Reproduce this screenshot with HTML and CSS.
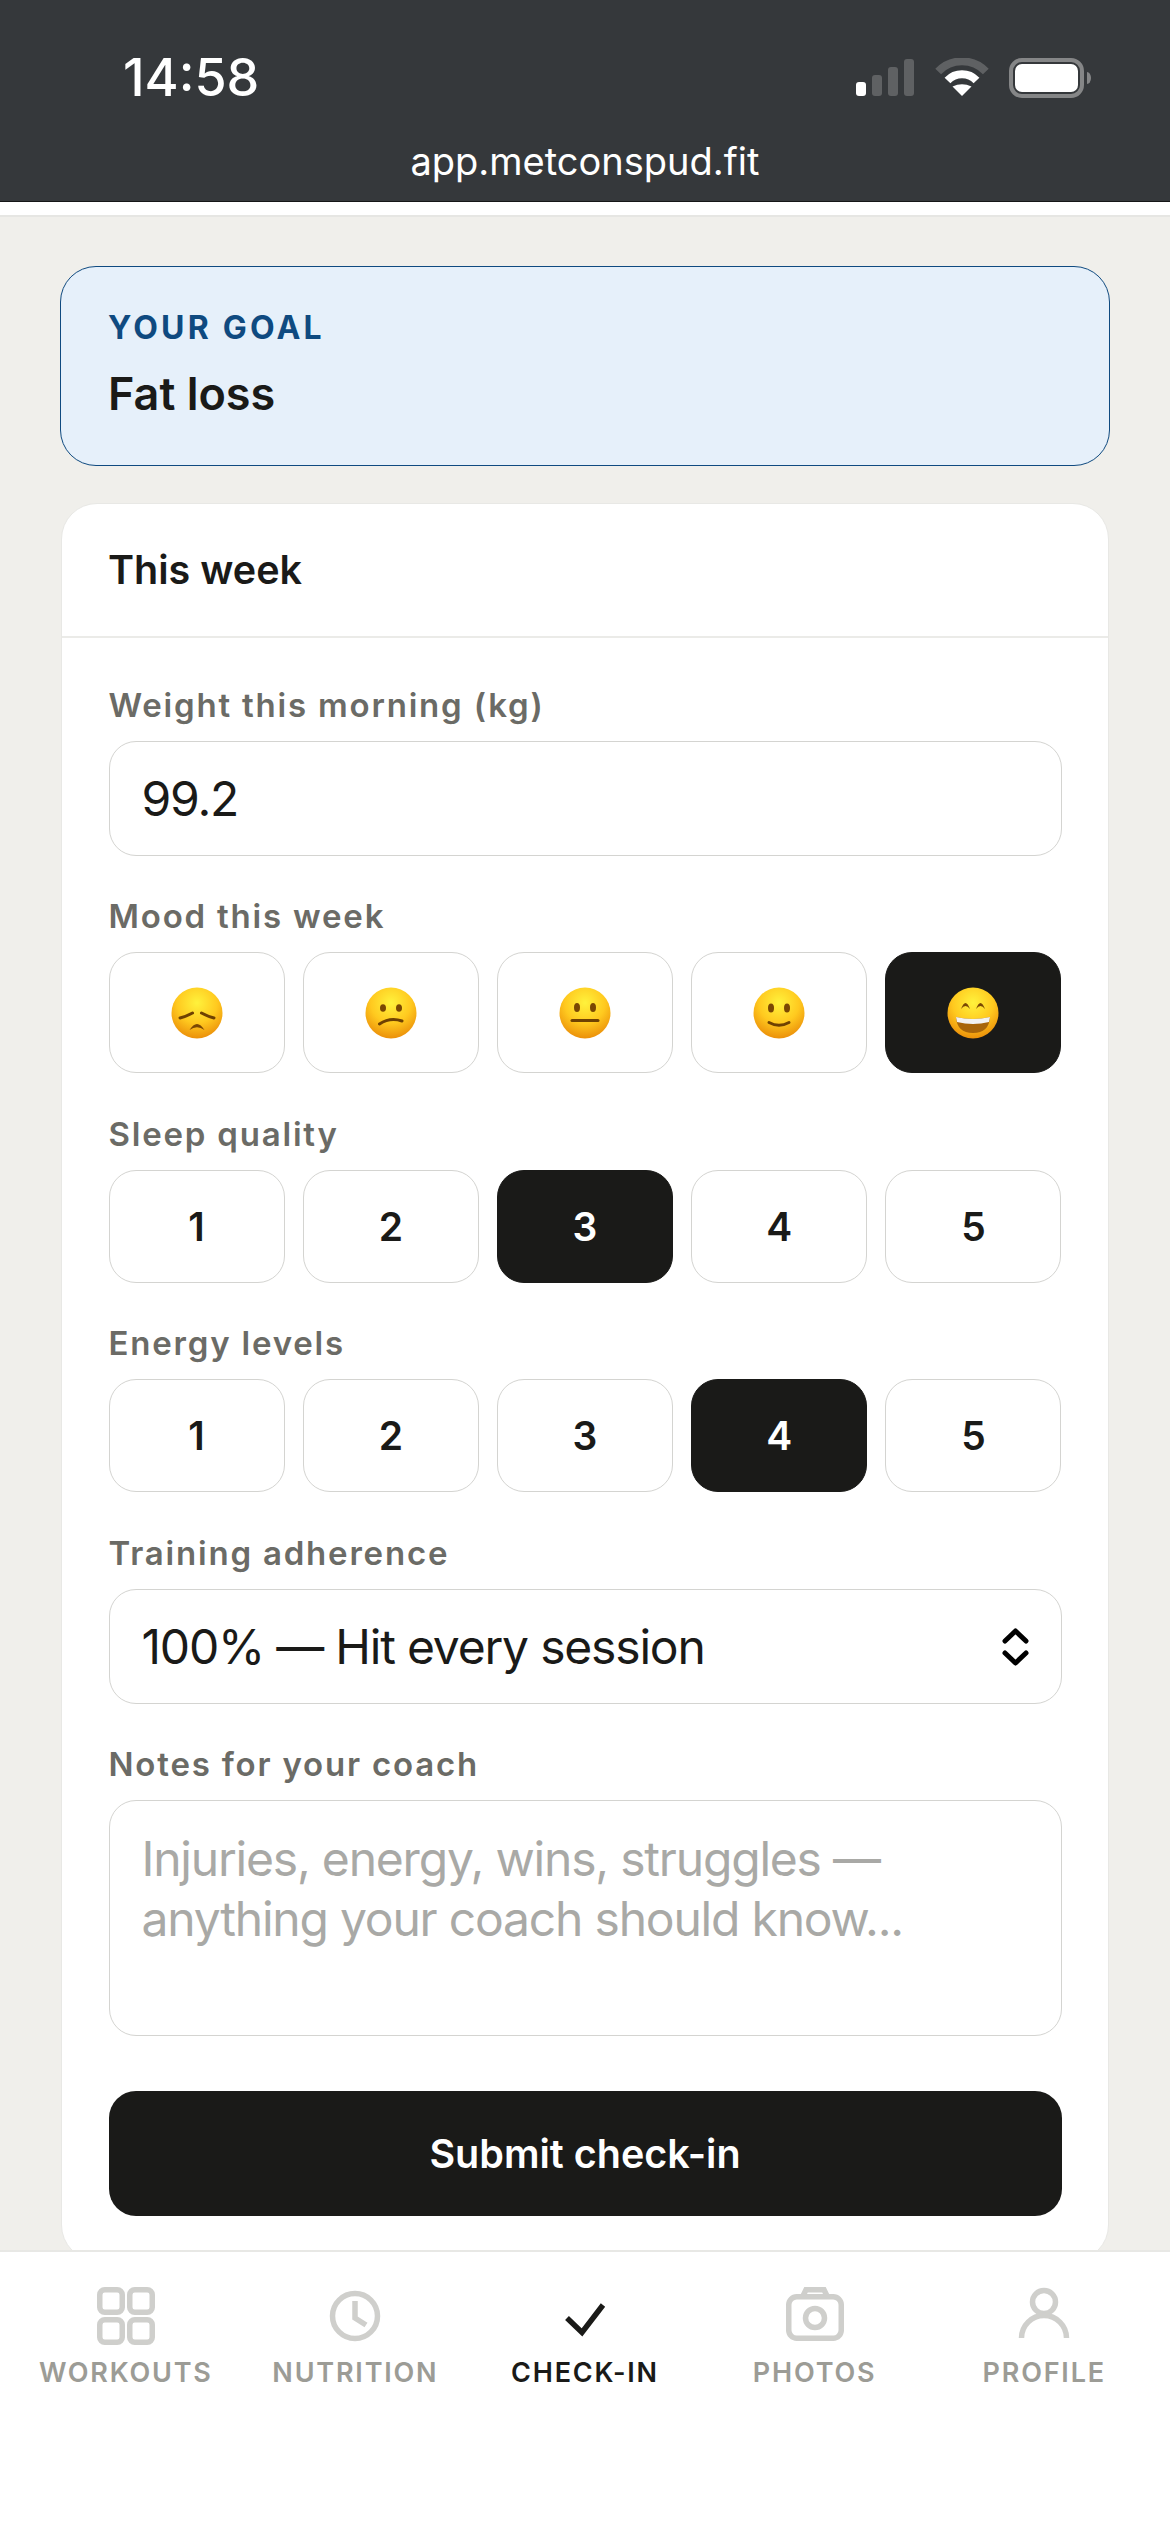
FILE: index.html
```html
<!DOCTYPE html>
<html lang="en">
<head>
    <meta charset="utf-8">
    <title>Check-in</title>
    <link rel="stylesheet" href="styles.css">
</head>
<body>
    <header class="statusbar">
        <div class="status-row">
            <span class="time">14:58</span>
            <svg class="status-icons" width="240" height="40" viewBox="0 0 240 40">
                <!-- signal -->
                <rect x="2" y="24" width="10" height="14" rx="3" fill="#fff"/>
                <rect x="18" y="17" width="10" height="21" rx="3" fill="#5f6163"/>
                <rect x="34" y="9" width="10" height="29" rx="3" fill="#5f6163"/>
                <rect x="50" y="1" width="10" height="37" rx="3" fill="#5f6163"/>
                <!-- wifi -->
                <path d="M84.2 13.5 A33 33 0 0 1 131.8 13.5" fill="none" stroke="#5f6163" stroke-width="8"/>
                <path d="M93.5 22.5 A20 20 0 0 1 122.5 22.5" fill="none" stroke="#fff" stroke-width="8"/>
                <path d="M108 38 L98.5 28.5 Q108 24 117.5 28.5 Z" fill="#fff"/>
                <!-- battery -->
                <rect x="157" y="2" width="71" height="36" rx="11" fill="none" stroke="#858687" stroke-width="4"/>
                <rect x="161" y="6" width="63" height="28" rx="7" fill="#fff"/>
                <path d="M233 14 a4 6 0 0 1 0 12 z" fill="#858687"/>
            </svg>
        </div>
        <div class="url">app.metconspud.fit</div>
    </header>
    <div class="strip"></div>

    <main class="page">
        <section class="goal">
            <div class="goal-label">YOUR GOAL</div>
            <div class="goal-value">Fat loss</div>
        </section>

        <section class="card">
            <h2 class="card-title">This week</h2>
            <form class="form">
                <label class="label" for="weight">Weight this morning (kg)</label>
                <input class="field" type="text" id="weight" value="99.2">

                <div class="label">Mood this week</div>
                <div class="choices mood">
                    <button type="button" class="choice">
                        <svg class="face" viewBox="0 0 52 52">
                            <use href="#face-base"/>
                            <path d="M9 31 Q15 29.500 21.500 26" class="face-line"/>
                            <path d="M43 31 Q37 29.500 30.500 26" class="face-line"/>
                            <path d="M18.500 43 Q26 31 33.500 43 Q26 37.500 18.500 43 Z" class="face-fill"/>
                        </svg>
                    </button>
                    <button type="button" class="choice">
                        <svg class="face" viewBox="0 0 52 52">
                            <use href="#face-base"/>
                            <ellipse cx="18" cy="21" rx="3" ry="3.800" class="face-fill"/>
                            <ellipse cx="34" cy="21" rx="3" ry="3.800" class="face-fill"/>
                            <path d="M14.500 37 Q25 30 37 34" class="face-line"/>
                        </svg>
                    </button>
                    <button type="button" class="choice">
                        <svg class="face" viewBox="0 0 52 52">
                            <use href="#face-base"/>
                            <ellipse cx="18" cy="20.500" rx="3" ry="4.500" class="face-fill"/>
                            <ellipse cx="34" cy="20.500" rx="3" ry="4.500" class="face-fill"/>
                            <path d="M13 33.500 H39" class="face-line"/>
                        </svg>
                    </button>
                    <button type="button" class="choice">
                        <svg class="face" viewBox="0 0 52 52">
                            <use href="#face-base"/>
                            <ellipse cx="18" cy="21" rx="3" ry="4.500" class="face-fill"/>
                            <ellipse cx="34" cy="21" rx="3" ry="4.500" class="face-fill"/>
                            <path d="M16 35.500 Q26 41 36 35.500" class="face-line"/>
                        </svg>
                    </button>
                    <button type="button" class="choice active">
                        <svg class="face" viewBox="0 0 52 52">
                            <use href="#face-base"/>
                            <path d="M14 22 Q18.500 10 23 22 Q18.500 16 14 22 Z" class="face-fill"/>
                            <path d="M29 22 Q33.500 10 38 22 Q33.500 16 29 22 Z" class="face-fill"/>
                            <path d="M9 30 Q26 34 43 30 Q42 46 26 46 Q10 46 9 30 Z" fill="#a8650a"/>
                            <path d="M9 30 Q26 34 43 30 L42 35 Q26 39 10 35 Z" fill="#f2f2f2"/>
                        </svg>
                    </button>
                </div>

                <div class="label">Sleep quality</div>
                <div class="choices scale">
                    <button type="button" class="choice">1</button>
                    <button type="button" class="choice">2</button>
                    <button type="button" class="choice active">3</button>
                    <button type="button" class="choice">4</button>
                    <button type="button" class="choice">5</button>
                </div>

                <div class="label">Energy levels</div>
                <div class="choices scale">
                    <button type="button" class="choice">1</button>
                    <button type="button" class="choice">2</button>
                    <button type="button" class="choice">3</button>
                    <button type="button" class="choice active">4</button>
                    <button type="button" class="choice">5</button>
                </div>

                <label class="label" for="adherence">Training adherence</label>
                <div class="select-wrap">
                    <select class="field" id="adherence">
                        <option>100% — Hit every session</option>
                    </select>
                    <svg class="chevrons" width="27" height="38" viewBox="0 0 27 38">
                        <path d="M3 13 L13.500 3 L24 13 M3 25 L13.500 35 L24 25" fill="none" stroke="#000" stroke-width="5" stroke-linecap="round" stroke-linejoin="round"/>
                    </svg>
                </div>

                <label class="label" for="notes">Notes for your coach</label>
                <textarea class="field notes" id="notes" placeholder="Injuries, energy, wins, struggles — anything your coach should know..."></textarea>

                <button type="submit" class="submit">Submit check-in</button>
            </form>
        </section>
    </main>

    <nav class="tabs">
        <a class="tab" href="#">
            <svg class="tab-icon" viewBox="0 0 66 66">
                <rect x="6.750" y="6.750" width="22.500" height="22.500" rx="5"/>
                <rect x="36.750" y="6.750" width="22.500" height="22.500" rx="5"/>
                <rect x="6.750" y="36.750" width="22.500" height="22.500" rx="5"/>
                <rect x="36.750" y="36.750" width="22.500" height="22.500" rx="5"/>
            </svg>
            <span>WORKOUTS</span>
        </a>
        <a class="tab" href="#">
            <svg class="tab-icon" viewBox="0 0 66 66">
                <circle cx="33" cy="33" r="22.500"/>
                <path d="M33 18 V35 L44 42"/>
            </svg>
            <span>NUTRITION</span>
        </a>
        <a class="tab active" href="#">
            <svg class="tab-icon" viewBox="0 0 66 66">
                <path d="M15 35 L30 49.500 L51 22"/>
            </svg>
            <span>CHECK-IN</span>
        </a>
        <a class="tab" href="#">
            <svg class="tab-icon" viewBox="0 0 66 66">
                <rect x="6.750" y="13.750" width="52.500" height="41.500" rx="8"/>
                <path d="M21 13 L24 6.750 H42 L45 13"/>
                <circle cx="33" cy="35" r="9.500"/>
            </svg>
            <span>PHOTOS</span>
        </a>
        <a class="tab" href="#">
            <svg class="tab-icon" viewBox="0 0 66 66">
                <circle cx="33" cy="19" r="11.500"/>
                <path d="M10.500 55 A22.500 22.500 0 0 1 55.500 55"/>
            </svg>
            <span>PROFILE</span>
        </a>
    </nav>

    <!-- shared emoji face -->
    <svg class="defs" width="0" height="0">
        <defs>
            <radialGradient id="face-grad" cx="50%" cy="30%" r="72%">
                <stop offset="0%" stop-color="#fff23c"/>
                <stop offset="55%" stop-color="#ffc91f"/>
                <stop offset="100%" stop-color="#ea8c08"/>
            </radialGradient>
            <g id="face-base">
                <circle cx="26" cy="26" r="25.500" fill="url(#face-grad)"/>
            </g>
        </defs>
    </svg>
</body>
</html>
```

FILE: styles.css
```css
* {
    box-sizing: border-box;
}
body {
    margin: 0;
    height: 2532px;
    display: flex;
    flex-direction: column;
    overflow: hidden;
    font-family: Inter, "Liberation Sans", sans-serif;
    color: #1a1a18;
    background-color: #fff;
}

/* Browser chrome at the top */
.statusbar {
    height: 202px;
    padding-top: 58px;
    background-color: #35383b;
    border-bottom: 1px solid #151617;
    color: #fff;
}
.status-row {
    display: flex;
    justify-content: space-between;
    align-items: flex-start;
    height: 40px;
    padding: 0 76px 0 123px;
}
.time {
    font-size: 52px;
    font-weight: 500;
    line-height: 40px;
}
.url {
    margin-top: 40px;
    text-align: center;
    font-size: 38px;
    line-height: 46px;
}
.strip {
    height: 15px;
    border-bottom: 2px solid #e6e6e3;
}

.page {
    flex: 1;
    min-height: 0;
    overflow: hidden;
    padding: 49px 60px 0;
    background-color: #f0efeb;
}

/* Goal banner */
.goal {
    height: 200px;
    padding: 41px 47px 0;
    background-color: #e6f0fa;
    border: 1.5px solid #0f4a80;
    border-radius: 36px;
}
.goal-label {
    font-size: 32px;
    font-weight: 700;
    line-height: 40px;
    letter-spacing: 3.200px;
    color: #0f4a80;
}
.goal-value {
    margin-top: 17px;
    font-size: 45px;
    font-weight: 600;
    line-height: 58px;
}

/* Main card */
.card {
    margin: 37px 1px 0;
    background-color: #fff;
    border: 1.5px solid #e8e8e5;
    border-radius: 36px;
}
.card-title {
    height: 134px;
    margin: 0;
    padding: 0 46px;
    font-size: 39.500px;
    font-weight: 600;
    line-height: 132px;
    border-bottom: 2px solid #ebebe8;
}
.form {
    display: flex;
    flex-direction: column;
    padding: 44.500px 46.500px 44px;
}
.label {
    display: block;
    height: 45px;
    margin-bottom: 13px;
    font-size: 33px;
    font-weight: 600;
    line-height: 45px;
    letter-spacing: 1.800px;
    color: #6b6b66;
}
.field {
    display: block;
    width: 100%;
    height: 115px;
    margin-bottom: 38.500px;
    padding: 0 32px;
    font-family: inherit;
    font-size: 48px;
    letter-spacing: -1.200px;
    color: #1a1a18;
    background-color: #fff;
    border: 1.5px solid #d4d4d1;
    border-radius: 27px;
    outline: none;
    appearance: none;
}
.select-wrap {
    position: relative;
}
.chevrons {
    position: absolute;
    top: 39px;
    right: 33px;
}
.notes {
    height: 236px;
    margin-bottom: 55px;
    padding-top: 28px;
    line-height: 60px;
    resize: none;
}
.notes::placeholder {
    color: #a9a9a6;
    opacity: 1;
}

/* Mood and 1-5 buttons */
.choices {
    display: grid;
    grid-template-columns: repeat(5, 1fr);
    gap: 18px;
    margin-bottom: 38.500px;
}
.choice {
    display: flex;
    align-items: center;
    justify-content: center;
    padding: 0;
    font-family: inherit;
    font-size: 39px;
    font-weight: 600;
    color: #1a1a18;
    background-color: #fff;
    border: 1.5px solid #d4d4d1;
    border-radius: 27px;
}
.choice.active {
    color: #fff;
    background-color: #1a1a18;
    border-color: #1a1a18;
}
.mood .choice {
    height: 121px;
}
.scale .choice {
    height: 113px;
}
.face {
    width: 52px;
    height: 52px;
}
.face-line {
    fill: none;
    stroke: #6f4102;
    stroke-width: 3;
    stroke-linecap: round;
}
.face-fill {
    fill: #7a4703;
}
.submit {
    height: 125px;
    font-family: inherit;
    font-size: 39.500px;
    font-weight: 600;
    color: #fff;
    background-color: #1a1a18;
    border: none;
    border-radius: 27px;
}

/* Bottom tabs */
.tabs {
    display: grid;
    grid-template-columns: repeat(5, 1fr);
    align-items: start;
    height: 282px;
    padding: 31px 11px 0;
    background-color: #fff;
    border-top: 2px solid #e8e8e5;
}
.tab {
    display: flex;
    flex-direction: column;
    align-items: center;
    font-size: 27px;
    font-weight: 600;
    line-height: 34px;
    letter-spacing: 1.800px;
    text-decoration: none;
    color: #9c9c96;
}
.tab.active {
    color: #1a1a18;
}
.tab-icon {
    flex: none;
    width: 66px;
    height: 66px;
    margin-bottom: 7px;
    fill: none;
    stroke: #cfcfcc;
    stroke-width: 5.500;
}
.tab.active .tab-icon {
    stroke: #1a1a18;
}
.defs {
    display: block;
    height: 0;
}
```
